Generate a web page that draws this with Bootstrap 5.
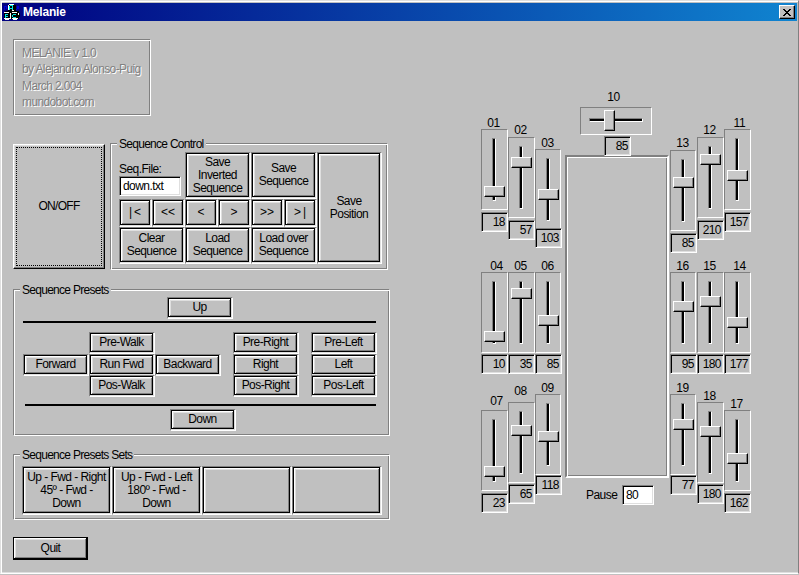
<!DOCTYPE html>
<html lang="en">
<head>
<meta charset="utf-8">
<meta name="viewport" content="width=device-width, initial-scale=1">
<title>Melanie</title>
<link href="https://cdn.jsdelivr.net/npm/bootstrap@5.3.0/dist/css/bootstrap.min.css" rel="stylesheet">
<style>
:root{--face:#c0c0c0;--lite:#dfdfdf;--dark:#808080}
body{background:var(--face);color:#000;font:12px/13px "Liberation Sans",Arial,sans-serif;letter-spacing:-.55px;width:799px;height:575px;overflow:hidden}
.window{width:799px;height:574px;border:1px solid var(--lite);border-right:1px solid var(--dark);border-bottom:1px solid #fff;box-shadow:inset 1px 1px #fff,inset 0 -1px var(--lite);padding:2px 1px 0 1px}
.titlebar{height:18px;background:linear-gradient(90deg,#000080,#1084d0);color:#fff;font-weight:700;letter-spacing:-.2px;padding:0 2px}
.titlebar span{padding-left:3px}
.close-btn{width:16px;height:14px;background:var(--face);border:1px solid;border-color:#fff #000 #000 #fff;box-shadow:inset -1px -1px var(--dark);padding:0}
.left-side{width:377px;margin-left:11px}
.etched{border:1px solid;border-color:var(--dark) #fff #fff var(--dark);box-shadow:inset 1px 1px #fff,inset -1px -1px var(--dark)}
.about{width:138px;height:77px;margin-top:18px;padding:5px 8px;line-height:16.4px;color:var(--dark);text-shadow:1px 1px #fff;letter-spacing:-.62px;white-space:nowrap}
.caption{display:table;background:var(--face);margin:-6px 0 0 6px;padding:0 2px;letter-spacing:-.72px}
.push{display:flex;align-items:center;justify-content:center;text-align:center;background:var(--face);color:#000;border:1px solid;border-color:#fff #000 #000 #fff;box-shadow:inset -1px -1px var(--dark),inset 1px 1px var(--lite);padding:0;border-radius:0;font:inherit;letter-spacing:inherit}
.framed{border-color:var(--dark) #fff #fff var(--dark);box-shadow:inset -1px -1px var(--lite),inset 1px 1px #000,inset -2px -2px #000,inset 2px 2px #fff,inset -3px -3px var(--dark),inset 3px 3px var(--lite);padding:0 1px 1px 0}
.power-row{margin-top:27px;gap:5px}
.power{width:92px;height:125px;margin-top:1px;padding:2px;letter-spacing:-.7px}
.focus-box{width:100%;height:100%;border:1px dotted #000}
.control{width:278px;height:127px}
.control-grid{display:grid;grid-template-columns:repeat(6,33px) 65px;grid-template-rows:47px 28px 37px;margin:1px 0 0 8px}
.step{letter-spacing:0}
.spread{letter-spacing:2px;padding-left:2px}
.wide{grid-column:span 2}
.tall{grid-column:7;grid-row:1/4}
.sunken{border:1px solid;border-color:var(--dark) #fff #fff var(--dark);box-shadow:inset 1px 1px #000,inset -1px -1px var(--lite);height:20px;line-height:18px}
.entry{background:#fff;padding:0 3px}
.seq-field{padding-bottom:3px}
.presets{width:377px;height:147px;margin-top:19px}
.solo-up{margin:0 0 0 153px}
.solo-down{margin:3px 0 0 156px}
.preset-grid{display:grid;grid-template-columns:66px 66px 78px 78px 66px;grid-template-rows:22px 21px 22px;margin:9px 0 7px 9px}
.preset-grid .push,.solo{width:66px;height:22px}
.rule{height:2px;background:#000}
.rule-a{width:353px;margin:2px 0 0 9px}
.rule-b{width:351px;margin-left:11px}
.sets{width:377px;height:66px;margin-top:18px}
.sets-row{margin:4px 0 0 8px}
.sets .push{width:90px;height:49px}
.quit{width:75px;height:23px;margin-top:17px;border-color:#000;box-shadow:inset -1px -1px #000,inset 1px 1px #fff,inset -2px -2px var(--dark),inset 2px 2px var(--lite)}
.robot{margin-left:91px}
.bank-col{width:81px;padding-top:95px}
.bank{height:143px}
.bank.mid{height:122px}
.servo{width:27px}
.tag{height:13px;line-height:14px;width:25px;text-align:center;letter-spacing:-.3px}
.tag.shift{padding-left:6px}
.panel{height:81px;width:27px;border:1px solid;border-color:var(--dark) #fff #fff var(--dark);padding-top:8px}
.slim .panel{width:26px}
.groove{width:4px;height:63px;margin-left:10px;border:1px solid;border-color:var(--dark) #fff #fff var(--dark);background:#000;position:relative}
.knob{position:absolute;left:-9px;top:calc(var(--at) - 10px);width:21px;height:11px;background:#c8c8c8;border:1px solid;border-color:#fff #000 #000 #fff;box-shadow:inset -1px -1px var(--dark)}
.value{width:27px;text-align:right;padding-right:2px;position:relative}
.d1{margin-top:1px}.d2{margin-top:2px}.d3{margin-top:3px}.d5{margin-top:5px}.up2{margin-top:-2px}
.s3{margin-top:3px}.s7{margin-top:7px}.s8{margin-top:8px}.s13{margin-top:13px}.s16{margin-top:16px}.s20{margin-top:20px}
.center-col{width:104px;margin:70px 1px 0 3px}
.head-servo{margin-left:15px}
.tag-h{width:67px;text-align:center;height:16px;letter-spacing:-.3px}
.panel-h{width:72px;height:28px;border:1px solid;border-color:var(--dark) #fff #fff var(--dark);padding:10px 0 0 8px}
.groove-h{width:54px;height:4px;border:1px solid;border-color:var(--dark) #fff #fff var(--dark);background:#000;position:relative}
.knob-h{position:absolute;left:calc(var(--at) - 10px);top:-9px;width:11px;height:21px;background:#c8c8c8;border:1px solid;border-color:#fff #000 #000 #fff;box-shadow:inset -1px -1px var(--dark)}
.chassis{height:323px;margin-top:-1px;border:2px solid;border-color:var(--dark) #fff #fff var(--dark);box-shadow:inset 1px 1px #fff,inset -1px -1px var(--dark)}
.pause-row{margin:7px 0 0 21px}
.pause-row label{width:36px}
.pause-row .entry{width:32px}
</style>
</head>
<body>
<div class="window">
  <div class="titlebar d-flex align-items-center">
    <svg width="16" height="16" viewBox="0 0 16 16" shape-rendering="crispEdges" aria-hidden="true">
      <path d="M4 1h8v6h3v2h1v4h-1v2H1v-1H0V9h1V7h3z" fill="#000"/>
      <path d="M5 0h5v1H5zM4 1h1v5H4zM0 8h5v1H0zM8 8h5v1H8zM6 9h1v5H6zM0 14h7v1H0zM1 15h4v1H1zM8 14h6v1H8zM9 15h4v1H9zM14 9h1v2h-1zM8 6h2v1H8z" fill="#fff"/>
      <path d="M0 2h3v1H0zM0 3h1v3H0zM2 3h1v2H2zM13 2h2v3h-2zM12 5h1v1h-1z" fill="#0000d8"/>
      <path d="M6 1h3v1H6zM5 2h1v4H5zM8 2h1v4H8zM6 4h2v1H6zM1 10h3v1H1zM1 11h1v3H1zM2 12h2v1H2zM9 10h3v1H9zM8 11h1v2H8zM9 13h3v1H9z" fill="#00e8e8"/>
    </svg>
    <span class="flex-grow-1">Melanie</span>
    <button class="close-btn d-flex align-items-center justify-content-center" aria-label="Close"><svg width="8" height="7" viewBox="0 0 8 7" shape-rendering="crispEdges"><path d="M0 0h2v1h1v1h2V1h1V0h2v1H7v1H6v1H5v1h1v1h1v1h1v1H6V6H5V5H3v1H2v1H0V6h1V5h1V4h1V3H2V2H1V1H0z"/></svg></button>
  </div>

  <main class="d-flex">
    <section class="left-side">
      <div class="about etched">MELANIE v 1.0<br>by Alejandro Alonso-Puig<br>March 2.004<br>mundobot.com</div>

      <div class="power-row d-flex">
        <button class="push power"><span class="focus-box d-flex align-items-center justify-content-center">ON/OFF</span></button>
        <div class="control etched">
          <div class="caption">Sequence Control</div>
          <div class="control-grid">
            <div class="wide seq-field d-flex flex-column justify-content-end">
              <label>Seq.File:</label>
              <div class="sunken entry me-1">down.txt</div>
            </div>
            <button class="push framed wide">Save<br>Inverted<br>Sequence</button>
            <button class="push framed wide">Save<br>Sequence</button>
            <button class="push framed tall">Save<br>Position</button>
            <button class="push framed spread">|&lt;</button>
            <button class="push framed step">&lt;&lt;</button>
            <button class="push framed step">&lt;</button>
            <button class="push framed step">&gt;</button>
            <button class="push framed step">&gt;&gt;</button>
            <button class="push framed spread">&gt;|</button>
            <button class="push framed wide">Clear<br>Sequence</button>
            <button class="push framed wide">Load<br>Sequence</button>
            <button class="push framed wide">Load over<br>Sequence</button>
          </div>
        </div>
      </div>

      <div class="presets etched">
        <div class="caption">Sequence Presets</div>
        <button class="push framed solo solo-up">Up</button>
        <div class="rule rule-a"></div>
        <div class="preset-grid">
          <span></span><button class="push framed">Pre-Walk</button><span></span><button class="push framed">Pre-Right</button><button class="push framed">Pre-Left</button>
          <button class="push framed">Forward</button><button class="push framed">Run Fwd</button><button class="push framed">Backward</button><button class="push framed">Right</button><button class="push framed">Left</button>
          <span></span><button class="push framed">Pos-Walk</button><span></span><button class="push framed">Pos-Right</button><button class="push framed">Pos-Left</button>
        </div>
        <div class="rule rule-b"></div>
        <button class="push framed solo solo-down">Down</button>
      </div>

      <div class="sets etched">
        <div class="caption">Sequence Presets Sets</div>
        <div class="d-flex sets-row">
          <button class="push framed">Up - Fwd - Right<br>45º - Fwd -<br>Down</button>
          <button class="push framed">Up - Fwd - Left<br>180º - Fwd -<br>Down</button>
          <button class="push framed" aria-label="Free slot 3"></button>
          <button class="push framed" aria-label="Free slot 4"></button>
        </div>
      </div>

      <button class="push quit">Quit</button>
    </section>

    <section class="robot d-flex">
      <div class="bank-col">
        <div class="bank d-flex align-items-start">
          <div class="servo"><div class="tag">01</div><div class="panel"><div class="groove"><div class="knob" style="--at:57px"></div></div></div><div class="sunken value d2">18</div></div>
          <div class="servo s7"><div class="tag">02</div><div class="panel d1"><div class="groove"><div class="knob" style="--at:20px"></div></div></div><div class="sunken value d2">57</div></div>
          <div class="servo slim s20"><div class="tag">03</div><div class="panel"><div class="groove"><div class="knob" style="--at:40px"></div></div></div><div class="sunken value up2">103</div></div>
        </div>
        <div class="bank mid d-flex align-items-start">
          <div class="servo"><div class="tag shift">04</div><div class="panel"><div class="groove"><div class="knob" style="--at:59px"></div></div></div><div class="sunken value d1">10</div></div>
          <div class="servo"><div class="tag">05</div><div class="panel"><div class="groove"><div class="knob" style="--at:16px"></div></div></div><div class="sunken value d1">35</div></div>
          <div class="servo slim"><div class="tag">06</div><div class="panel"><div class="groove"><div class="knob" style="--at:43px"></div></div></div><div class="sunken value d1">85</div></div>
        </div>
        <div class="bank d-flex align-items-start">
          <div class="servo s13"><div class="tag shift">07</div><div class="panel d3"><div class="groove"><div class="knob" style="--at:56px"></div></div></div><div class="sunken value d2">23</div></div>
          <div class="servo s3"><div class="tag">08</div><div class="panel d5"><div class="groove"><div class="knob" style="--at:23px"></div></div></div><div class="sunken value d1">65</div></div>
          <div class="servo slim"><div class="tag">09</div><div class="panel"><div class="groove"><div class="knob" style="--at:37px"></div></div></div><div class="sunken value">118</div></div>
        </div>
      </div>

      <div class="center-col">
        <div class="d-flex flex-column align-items-start head-servo">
          <div class="tag-h">10</div>
          <div class="panel-h"><div class="groove-h"><div class="knob-h" style="--at:24px"></div></div></div>
          <div class="sunken value d1 ms-4">85</div>
        </div>
        <div class="chassis"></div>
        <div class="d-flex align-items-center pause-row"><label>Pause</label><div class="sunken entry">80</div></div>
      </div>

      <div class="bank-col">
        <div class="bank d-flex align-items-start">
          <div class="servo slim s20"><div class="tag">13</div><div class="panel d1"><div class="groove"><div class="knob" style="--at:27px"></div></div></div><div class="sunken value d2">85</div></div>
          <div class="servo s7"><div class="tag">12</div><div class="panel d1"><div class="groove"><div class="knob" style="--at:17px"></div></div></div><div class="sunken value d2">210</div></div>
          <div class="servo"><div class="tag shift">11</div><div class="panel"><div class="groove"><div class="knob" style="--at:41px"></div></div></div><div class="sunken value d2">157</div></div>
        </div>
        <div class="bank mid d-flex align-items-start">
          <div class="servo slim"><div class="tag">16</div><div class="panel"><div class="groove"><div class="knob" style="--at:29px"></div></div></div><div class="sunken value d1">95</div></div>
          <div class="servo"><div class="tag">15</div><div class="panel"><div class="groove"><div class="knob" style="--at:24px"></div></div></div><div class="sunken value d1">180</div></div>
          <div class="servo"><div class="tag shift">14</div><div class="panel"><div class="groove"><div class="knob" style="--at:45px"></div></div></div><div class="sunken value d1">177</div></div>
        </div>
        <div class="bank d-flex align-items-start">
          <div class="servo slim"><div class="tag">19</div><div class="panel"><div class="groove"><div class="knob" style="--at:25px"></div></div></div><div class="sunken value">77</div></div>
          <div class="servo s8"><div class="tag">18</div><div class="panel"><div class="groove"><div class="knob" style="--at:24px"></div></div></div><div class="sunken value d1">180</div></div>
          <div class="servo s16"><div class="tag">17</div><div class="panel"><div class="groove"><div class="knob" style="--at:43px"></div></div></div><div class="sunken value d2">162</div></div>
        </div>
      </div>
    </section>
  </main>
</div>
<script src="https://cdn.jsdelivr.net/npm/bootstrap@5.3.0/dist/js/bootstrap.bundle.min.js"></script>
</body>
</html>
